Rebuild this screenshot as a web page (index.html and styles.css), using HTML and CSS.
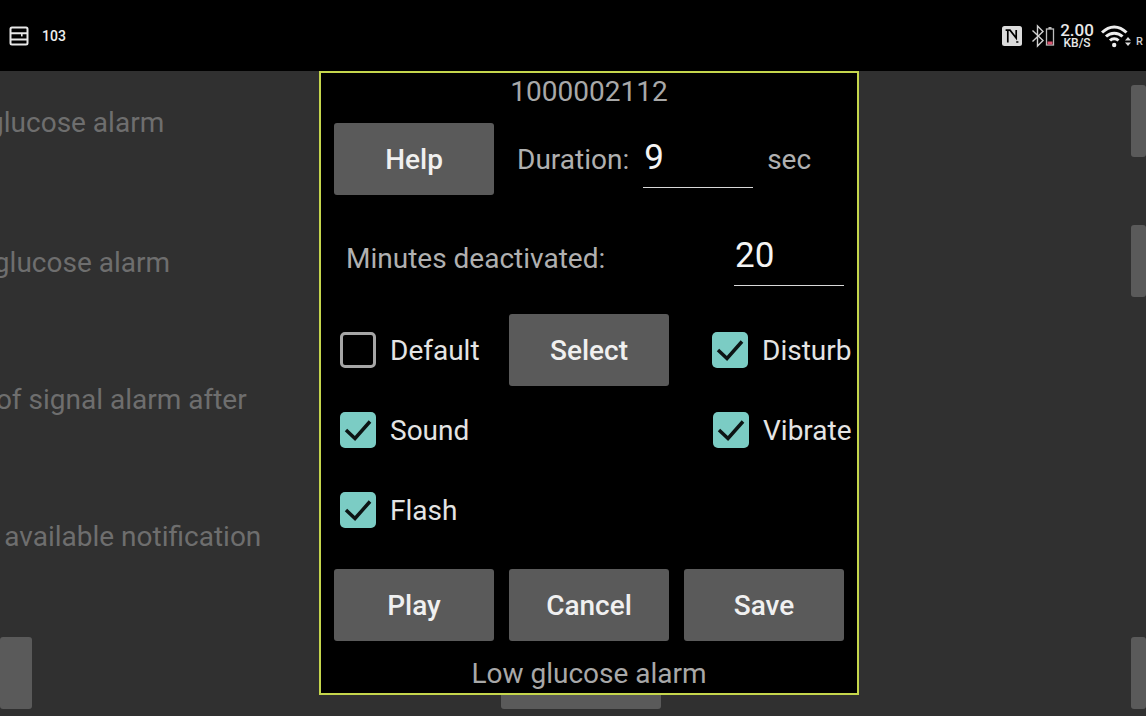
FILE: index.html
```html
<!DOCTYPE html>
<html lang="en">
<head>
  <meta charset="UTF-8">
  <title>Low glucose alarm</title>
  <link rel="stylesheet" href="styles.css">
</head>
<body>

  <header class="statusbar">
    <div class="status-left">
      <svg class="icon-list" width="20" height="20" viewBox="0 0 20 20">
        <rect x="1.5" y="1.5" width="17" height="17" rx="1.5" fill="none" stroke="#e8e8e8" stroke-width="2"/>
        <path d="M2 7.2H18M2 13.4H18" stroke="#e8e8e8" stroke-width="2" fill="none"/>
        <rect x="12" y="8" width="1.6" height="2.4" fill="#e8e8e8"/>
      </svg>
      <span class="status-count">103</span>
    </div>
    <div class="status-right">
      <svg class="icon-nfc" width="20" height="20" viewBox="0 0 20 20">
        <rect width="20" height="20" rx="2.5" fill="#dcdcdc"/>
        <path d="M5.8 16.5V4.2H8L14.2 12V4M5.8 4.2H3.6M14.2 16H16.4" fill="none" stroke="#000" stroke-width="1.7"/>
      </svg>
      <svg class="icon-bt" width="24" height="24" viewBox="0 0 24 24">
        <path d="M1.5 6.5L12 16.5L6.5 22V2L12 7.5L1.5 17.5" fill="none" stroke="#d0d0d0" stroke-width="1.4"/>
        <rect x="15.5" y="5" width="7" height="16" fill="none" stroke="#bdbdbd" stroke-width="1.3"/>
        <rect x="17.5" y="3" width="3" height="2" fill="#bdbdbd"/>
        <rect x="16.5" y="17.5" width="5" height="3" fill="#d9536f"/>
      </svg>
      <div class="speed">
        <span class="speed-value">2.00</span>
        <span class="speed-unit">KB/S</span>
      </div>
      <svg class="icon-wifi" width="30" height="24" viewBox="0 0 30 24">
        <path d="M1 8.5C8.5 1 18 1 25.5 8.5" fill="none" stroke="#eee" stroke-width="3"/>
        <path d="M5 12.5C9.5 8 17 8 21.5 12.5" fill="none" stroke="#eee" stroke-width="3"/>
        <path d="M9 16.5C11.5 14 15 14 17.5 16.5" fill="none" stroke="#eee" stroke-width="3"/>
        <circle cx="13.2" cy="21" r="2.2" fill="#eee"/>
        <path d="M24 16.5H30L27 13ZM24 18.5H30L27 22Z" fill="#ddd"/>
      </svg>
      <span class="status-r">R</span>
    </div>
  </header>

  <main class="backdrop">
    <div class="bg-top">
      <div class="bg-labels">
        <p>Low glucose alarm</p>
        <p>High glucose alarm</p>
        <p>Loss of signal alarm after</p>
        <p>Wake available notification</p>
      </div>
      <div class="bg-keys">
        <div class="bg-key"></div>
        <div class="bg-key"></div>
      </div>
    </div>
    <div class="bg-bottom">
      <div class="bg-key key-left"></div>
      <div class="bg-key key-mid"></div>
      <div class="bg-key key-right"></div>
    </div>
  </main>

  <section class="dialog">
    <div class="dialog-title">1000002112</div>

    <div class="row row-duration">
      <button class="btn">Help</button>
      <span class="dim-label label-duration">Duration:</span>
      <span class="field">9</span>
      <span class="dim-label label-sec">sec</span>
    </div>

    <div class="row row-minutes">
      <span class="dim-label">Minutes deactivated:</span>
      <span class="field">20</span>
    </div>

    <div class="grid">
      <label class="check check-first"><span class="box"></span>Default</label>
      <button class="btn">Select</button>
      <label class="check check-right"><span class="box on"><svg width="36" height="36" viewBox="0 0 36 36"><path d="M6 18L15 26.5L30 9.5" fill="none" stroke="#0c1414" stroke-width="3.5"/></svg></span>Disturb</label>

      <label class="check check-first"><span class="box on"><svg width="36" height="36" viewBox="0 0 36 36"><path d="M6 18L15 26.5L30 9.5" fill="none" stroke="#0c1414" stroke-width="3.5"/></svg></span>Sound</label>
      <span></span>
      <label class="check check-right check-vibrate"><span class="box on"><svg width="36" height="36" viewBox="0 0 36 36"><path d="M6 18L15 26.5L30 9.5" fill="none" stroke="#0c1414" stroke-width="3.5"/></svg></span>Vibrate</label>

      <label class="check check-first"><span class="box on"><svg width="36" height="36" viewBox="0 0 36 36"><path d="M6 18L15 26.5L30 9.5" fill="none" stroke="#0c1414" stroke-width="3.5"/></svg></span>Flash</label>
    </div>

    <div class="actions">
      <button class="btn">Play</button>
      <button class="btn">Cancel</button>
      <button class="btn">Save</button>
    </div>

    <div class="dialog-title dialog-foot">Low glucose alarm</div>
  </section>

</body>
</html>
```

FILE: styles.css
```css
* {
  box-sizing: border-box;
}

html, body {
  height: 100%;
}

body {
  margin: 0;
  width: 1146px;
  height: 716px;
  overflow: hidden;
  display: flex;
  flex-direction: column;
  background: #303030;
  color: #e4e4e4;
  font-family: Roboto, sans-serif;
  font-size: 28px;
}

/* status bar */
.statusbar {
  height: 71px;
  flex: none;
  background: #000;
  display: flex;
  justify-content: space-between;
  align-items: center;
}

.status-left {
  display: flex;
  align-items: center;
  padding-left: 9px;
  gap: 13px;
}

.status-count {
  font-size: 14px;
  font-weight: 500;
  color: #eee;
}

.status-right {
  display: flex;
  align-items: center;
  padding-right: 3px;
}

.icon-nfc {
  margin-right: 9px;
}

.icon-bt {
  margin-right: 5px;
}

.speed {
  display: flex;
  flex-direction: column;
  align-items: center;
  width: 34px;
  margin-right: 7px;
  color: #e8e8e8;
}

.speed-value {
  font-size: 17px;
  line-height: 14px;
  font-weight: 500;
}

.speed-unit {
  font-size: 12px;
  line-height: 12px;
  font-weight: 500;
}

.status-r {
  font-size: 11px;
  font-weight: 500;
  color: #ccc;
  margin: 11px 0 0 5px;
}

/* dimmed screen behind the dialog */
.backdrop {
  flex: 1;
  overflow: hidden;
}

.bg-top {
  height: 566px;
  display: flex;
  justify-content: space-between;
}

.bg-labels {
  margin-left: -71px;
  padding-top: 36px;
  color: #6e6e6e;
}

.bg-labels p {
  margin: 0;
  height: 137px;
  line-height: 32px;
}

.bg-labels p:first-child {
  height: 140px;
}

.bg-keys {
  width: 15px;
  padding-top: 14px;
  display: flex;
  flex-direction: column;
  gap: 68px;
}

.bg-key {
  height: 72px;
  background: #5a5a5a;
  border-radius: 3px;
}

.bg-bottom {
  display: flex;
}

.key-left {
  width: 32px;
}

.key-mid {
  width: 160px;
  margin-left: 469px;
}

.key-right {
  width: 15px;
  margin-left: auto;
}

/* dialog */
.dialog {
  position: absolute;
  left: 319px;
  top: 71px;
  width: 540px;
  height: 624px;
  background: #000;
  border: 2px solid #c5d64c;
  padding: 0 13px;
  display: flex;
  flex-direction: column;
}

.dialog-title {
  height: 36px;
  line-height: 38px;
  text-align: center;
  color: #a8a8a8;
}

.btn {
  width: 160px;
  height: 72px;
  padding: 1px 0 0;
  border: none;
  border-radius: 3px;
  background: #5a5a5a;
  color: #f0f0f0;
  font-family: Roboto, sans-serif;
  font-size: 28px;
  font-weight: 500;
}

.row {
  display: flex;
  align-items: center;
}

.dim-label {
  color: #b0b0b0;
}

.field {
  display: block;
  width: 110px;
  height: 52px;
  padding-left: 1px;
  border-bottom: 1.5px solid #d8d8d8;
  color: #f4f4f4;
  font-size: 35px;
  line-height: 44px;
}

.row-duration {
  margin-top: 14px;
}

.label-duration {
  margin-left: 23px;
  margin-right: 14px;
}

.label-sec {
  margin-left: 14px;
}

.row-duration .field {
  margin-top: 6px;
}

.row-minutes {
  margin-top: 39px;
  justify-content: space-between;
  padding-left: 12px;
}

.row-minutes .dim-label {
  padding-bottom: 4px;
}

.grid {
  margin-top: 28px;
  display: grid;
  grid-template-columns: 160px 160px 160px;
  grid-auto-rows: 72px;
  column-gap: 15px;
  row-gap: 8px;
  align-items: center;
}

.check {
  display: flex;
  align-items: center;
  gap: 14px;
  color: #e4e4e4;
  white-space: nowrap;
}

.check-first {
  padding-left: 6px;
}

.check-right {
  padding-left: 28px;
}

.check-vibrate {
  padding-left: 29px;
}

.box {
  width: 36px;
  height: 36px;
  flex: none;
  border: 3.5px solid #a6a6a6;
  border-radius: 5px;
}

.box.on {
  border: none;
  background: #7bccc4;
}

.box svg {
  display: block;
}

.actions {
  margin-top: 23px;
  display: flex;
  gap: 15px;
}

.dialog-foot {
  margin-top: 14px;
}
```
